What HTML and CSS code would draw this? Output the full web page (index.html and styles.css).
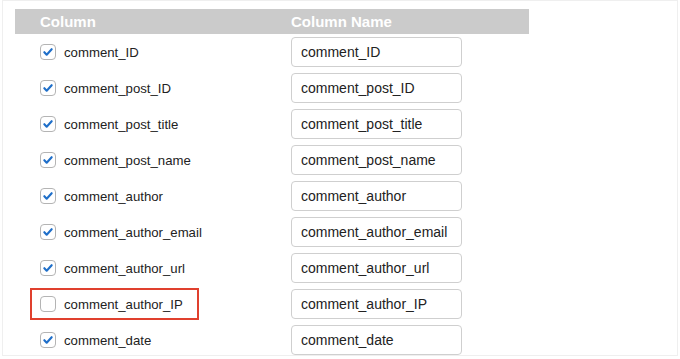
FILE: index.html
```html
<!DOCTYPE html>
<html>
<head>
<meta charset="utf-8">
<link rel="stylesheet" href="styles.css">
</head>
<body>
<div class="frame">
  <div class="grid">
    <div class="head">
      <div class="hcell hcol">Column</div>
      <div class="hcell">Column Name</div>
    </div>
    <div class="row">
      <div class="lab"><span class="box on"><svg viewBox="0 0 16 16"><path d="M3.8 8.2l2.7 2.9L12.2 4.8"/></svg></span><span>comment_ID</span></div>
      <div class="inp">comment_ID</div>
    </div>
    <div class="row">
      <div class="lab"><span class="box on"><svg viewBox="0 0 16 16"><path d="M3.8 8.2l2.7 2.9L12.2 4.8"/></svg></span><span>comment_post_ID</span></div>
      <div class="inp">comment_post_ID</div>
    </div>
    <div class="row">
      <div class="lab"><span class="box on"><svg viewBox="0 0 16 16"><path d="M3.8 8.2l2.7 2.9L12.2 4.8"/></svg></span><span>comment_post_title</span></div>
      <div class="inp">comment_post_title</div>
    </div>
    <div class="row">
      <div class="lab"><span class="box on"><svg viewBox="0 0 16 16"><path d="M3.8 8.2l2.7 2.9L12.2 4.8"/></svg></span><span>comment_post_name</span></div>
      <div class="inp">comment_post_name</div>
    </div>
    <div class="row">
      <div class="lab"><span class="box on"><svg viewBox="0 0 16 16"><path d="M3.8 8.2l2.7 2.9L12.2 4.8"/></svg></span><span>comment_author</span></div>
      <div class="inp">comment_author</div>
    </div>
    <div class="row">
      <div class="lab"><span class="box on"><svg viewBox="0 0 16 16"><path d="M3.8 8.2l2.7 2.9L12.2 4.8"/></svg></span><span>comment_author_email</span></div>
      <div class="inp">comment_author_email</div>
    </div>
    <div class="row">
      <div class="lab"><span class="box on"><svg viewBox="0 0 16 16"><path d="M3.8 8.2l2.7 2.9L12.2 4.8"/></svg></span><span>comment_author_url</span></div>
      <div class="inp">comment_author_url</div>
    </div>
    <div class="row">
      <div class="lab hl"><span class="box"></span><span>comment_author_IP</span></div>
      <div class="inp">comment_author_IP</div>
    </div>
    <div class="row">
      <div class="lab"><span class="box on"><svg viewBox="0 0 16 16"><path d="M3.8 8.2l2.7 2.9L12.2 4.8"/></svg></span><span>comment_date</span></div>
      <div class="inp">comment_date</div>
    </div>
  </div>
</div>
</body>
</html>
```
FILE: styles.css
```css
html, body {
  margin: 0;
  padding: 0;
  background: #fff;
}
body {
  font-family: "Liberation Sans", Arial, sans-serif;
}
.frame {
  box-sizing: border-box;
  margin-left: 2px;
  width: 676px;
  height: 356px;
  border: 1px solid #efefef;
  padding: 8px 0 0 12px;
  overflow: hidden;
}
.grid {
  width: 514px;
}
.head {
  display: flex;
  height: 25px;
  background: #cbcbcb;
  align-items: center;
}
.hcell {
  color: #fff;
  font-weight: bold;
  font-size: 15px;
}
.hcol {
  width: 251px;
  padding-left: 25px;
}
.row {
  display: flex;
  height: 36px;
  align-items: flex-start;
  padding-top: 3px;
  box-sizing: border-box;
}
.lab {
  box-sizing: border-box;
  width: 276px;
  height: 30px;
  display: flex;
  align-items: center;
  font-size: 13.2px;
  color: #222;
  padding-left: 13px;
}
.lab.hl {
  position: relative;
}
.lab.hl::after {
  content: "";
  position: absolute;
  left: 15px;
  top: -1px;
  width: 165px;
  height: 28px;
  border: 2px solid #e0402e;
}
.lab > span:last-child {
  margin-left: 8px;
}
.box {
  box-sizing: border-box;
  width: 16px;
  height: 16px;
  margin-left: 12px;
  border: 1px solid #b4b4b4;
  border-radius: 4px;
  background: #fff;
  display: inline-flex;
  align-items: center;
  justify-content: center;
  flex: none;
}
.box svg {
  width: 14px;
  height: 14px;
}
.box svg path {
  fill: none;
  stroke: #1f6fc9;
  stroke-width: 2.4;
  stroke-linecap: round;
  stroke-linejoin: round;
}
.inp {
  box-sizing: border-box;
  width: 171px;
  height: 30px;
  border: 1px solid #cfcfcf;
  border-radius: 4px;
  padding-left: 9px;
  display: flex;
  align-items: center;
  font-size: 14px;
  color: #222;
}
```
